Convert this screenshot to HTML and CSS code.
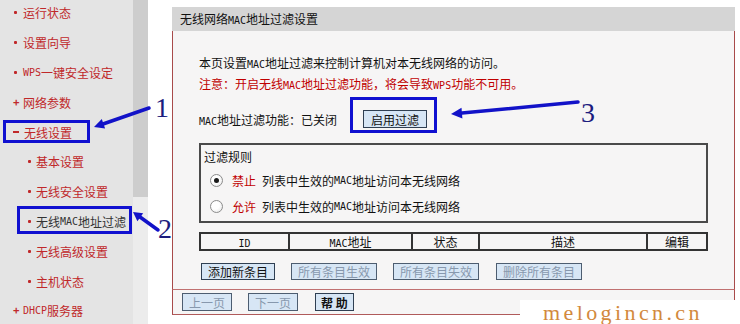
FILE: index.html
```html
<!DOCTYPE html>
<html lang="zh-CN">
<head>
    <meta charset="UTF-8">
    <meta name="viewport" content="width=device-width, initial-scale=1.0">
    <title>无线MAC地址过滤</title>
    <link rel="stylesheet" href="styles.css">
</head>
<body>
    <div class="page">
        <div class="sidebar">
            <ul class="menu">
                <li class="item"><span class="dot"></span>运行状态</li>
                <li class="item"><span class="dot"></span>设置向导</li>
                <li class="item"><span class="dot"></span><span class="en">WPS</span>一键安全设定</li>
                <li class="item"><span class="plus">+</span>网络参数</li>
                <li class="item"><span class="minus"></span>无线设置</li>
                <li class="item sub"><span class="dot"></span>基本设置</li>
                <li class="item sub"><span class="dot"></span>无线安全设置</li>
                <li class="item sub current"><span class="dot"></span>无线<span class="en">MAC</span>地址过滤</li>
                <li class="item sub"><span class="dot"></span>无线高级设置</li>
                <li class="item sub"><span class="dot"></span>主机状态</li>
                <li class="item"><span class="plus">+</span><span class="en">DHCP</span>服务器</li>
            </ul>
        </div>
        <div class="scrollbar"><div class="thumb"></div></div>

        <div class="main">
            <div class="title">无线网络<span class="en">MAC</span>地址过滤设置</div>
            <div class="panel">
                <p class="intro">本页设置<span class="en">MAC</span>地址过滤来控制计算机对本无线网络的访问。</p>
                <p class="intro note">注意：开启无线<span class="en">MAC</span>地址过滤功能，将会导致<span class="en">WPS</span>功能不可用。</p>

                <div class="status-row">
                    <span class="status-label"><span class="en">MAC</span>地址过滤功能：已关闭</span>
                    <button class="btn btn-enable">启用过滤</button>
                </div>

                <div class="rules">
                    <div class="rules-title">过滤规则</div>
                    <div class="rule"><span class="radio checked"></span><span class="rule-key">禁止</span>列表中生效的<span class="en">MAC</span>地址访问本无线网络</div>
                    <div class="rule"><span class="radio"></span><span class="rule-key">允许</span>列表中生效的<span class="en">MAC</span>地址访问本无线网络</div>
                </div>

                <div class="list-head">
                    <div class="cell"><span class="en">ID</span></div>
                    <div class="cell"><span class="en">MAC</span>地址</div>
                    <div class="cell">状态</div>
                    <div class="cell">描述</div>
                    <div class="cell">编辑</div>
                </div>

                <div class="actions">
                    <button class="btn">添加新条目</button>
                    <button class="btn disabled">所有条目生效</button>
                    <button class="btn disabled">所有条目失效</button>
                    <button class="btn disabled">删除所有条目</button>
                </div>
            </div>
            <div class="panel-foot">
                <button class="btn disabled">上一页</button>
                <button class="btn disabled">下一页</button>
                <button class="btn btn-help">帮 助</button>
            </div>
        </div>
    </div>

    <!-- hand-drawn annotations on top of the screenshot -->
    <svg class="marks" width="740" height="324" viewBox="0 0 740 324">
        <g fill="none" stroke="#1010d0" stroke-width="3">
            <rect x="4.5" y="121.5" width="84" height="20"></rect>
            <rect x="18.5" y="207.5" width="112" height="25"></rect>
            <rect x="351.5" y="98.5" width="84" height="33"></rect>
        </g>
        <g stroke="#1212c8" stroke-width="3.5" stroke-linecap="round">
            <line x1="149" y1="108" x2="103" y2="124"></line>
            <line x1="158" y1="230" x2="140" y2="217"></line>
            <line x1="578" y1="102" x2="462" y2="113"></line>
        </g>
        <g fill="#1212c8">
            <polygon points="94,127 105.1,128.5 101.8,119"></polygon>
            <polygon points="133,212 143.2,213.2 137.4,221.3"></polygon>
            <polygon points="451,114 462.4,118.4 461.5,107.8"></polygon>
        </g>
        <g class="mark-num">
            <text x="155" y="117">1</text>
            <text x="158" y="238">2</text>
            <text x="581" y="122">3</text>
        </g>
    </svg>

    <div class="watermark">melogincn.cn</div>
</body>
</html>
```

FILE: styles.css
```css
html, body {
    margin: 0;
    padding: 0;
}

body {
    width: 740px;
    height: 324px;
    overflow: hidden;
    position: relative;
    background: #fff;
    font-family: "Noto Sans CJK SC", "Liberation Sans", sans-serif;
    font-size: 12px;
    color: #111;
}

/* latin letters in the router pages are a narrow fixed-width bitmap font */
.en {
    font-family: "DejaVu Sans Mono", monospace;
    font-size: 10px;
}

.page {
    display: flex;
    height: 324px;
}

/* left menu */
.sidebar {
    width: 133px;
    background: #e4e4e4;
}

.menu {
    list-style: none;
    margin: -2px 0 0;
    padding: 0;
}

.item {
    height: 29.8px;
    display: flex;
    align-items: center;
    padding-left: 14px;
    color: #c0282a;
    white-space: nowrap;
}

.item.sub {
    padding-left: 28px;
}

.item.current {
    color: #333;
}

.dot {
    width: 3px;
    height: 3px;
    border-radius: 1px;
    background: #c0282a;
    margin-right: 6px;
}

.sub .dot {
    margin-right: 5px;
}

.plus {
    width: 6px;
    margin: 0 4px 0 -1px;
    font-weight: bold;
    font-size: 11px;
    line-height: 1;
    color: #c0282a;
}

.minus {
    width: 6px;
    height: 2px;
    background: #c0282a;
    margin: 0 5px 0 -1px;
}

.scrollbar {
    width: 15px;
    background: #ececec;
}

.scrollbar .thumb {
    height: 197px;
    background: #cdcdcd;
}

/* main frame */
.main {
    width: 563px;
    margin-left: 24px;
    padding-top: 7px;
}

.title {
    height: 24px;
    line-height: 24px;
    padding-left: 8px;
    background: #d5d5d5;
}

.panel {
    background: #f6f5f5;
    border-left: 1px solid #a84a4a;
    border-right: 1px solid #a84a4a;
    border-bottom: 1px solid #c07070;
    padding: 22px 0 9px 26px;
}

.intro {
    margin: 0;
    line-height: 19px;
}

.note {
    color: #c00000;
}

.status-row {
    display: flex;
    align-items: center;
    margin-top: 15px;
    height: 18px;
}

.status-label {
    width: 164px;
}

.btn {
    font-family: inherit;
    font-size: 12px;
    height: 17px;
    line-height: 15px;
    padding: 0 6px;
    margin: 0;
    background: #d7e6f5;
    border: 1px solid #2f3f52;
    border-radius: 0;
    color: #111;
}

.btn.disabled {
    color: #8798ad;
    border-color: #4d5d70;
}

.btn-enable {
    height: 18px;
    padding: 0 7px;
}

.rules {
    margin-top: 15px;
    border: 2px solid #4a4a4a;
    padding: 2px 0 0 3px;
    box-sizing: border-box;
    width: 509px;
    height: 80px;
}

.rules-title {
    line-height: 20px;
}

.rule {
    display: flex;
    align-items: center;
    height: 26px;
}

.rule:first-of-type {
    margin-top: 2px;
}

.radio {
    width: 13px;
    height: 13px;
    box-sizing: border-box;
    border: 1px solid #8c8c8c;
    border-radius: 50%;
    background: radial-gradient(circle at 40% 40%, #fff 40%, #e2e2e2 100%);
    margin: 0 9px 0 6px;
    display: flex;
    align-items: center;
    justify-content: center;
}

.radio.checked::after {
    content: "";
    width: 5px;
    height: 5px;
    border-radius: 50%;
    background: #1a1a1a;
}

.rule-key {
    color: #c00000;
    margin-right: 6px;
}

.list-head {
    margin-top: 9px;
    width: 509px;
    box-sizing: border-box;
    display: grid;
    grid-template-columns: 87px 121px 65px 166px 58px;
    gap: 2px;
    padding: 2px;
    background: #333;
}

.list-head .cell {
    background: #f6f5f5;
    height: 15px;
    line-height: 15px;
    text-align: center;
}

.actions {
    display: flex;
    gap: 16px;
    margin: 12px 0 0 2px;
}

.actions .btn:last-child {
    margin-left: 1px;
}

.panel-foot {
    background: #f6f5f5;
    border-left: 1px solid #a84a4a;
    border-right: 1px solid #a84a4a;
    border-bottom: 1px solid #b05a5a;
    padding: 3px 0 3px 9px;
    display: flex;
    gap: 16px;
}

.panel-foot .btn {
    height: 18px;
}

.btn-help {
    padding: 0 5px;
    margin-left: 1px;
    font-weight: bold;
}

/* annotations */
.marks {
    position: absolute;
    left: 0;
    top: 0;
    pointer-events: none;
}

.mark-num {
    font-family: "Liberation Serif", serif;
    font-size: 28px;
    fill: #1c1c7e;
}

.watermark {
    position: absolute;
    left: 520px;
    top: 300px;
    width: 220px;
    height: 24px;
    box-sizing: border-box;
    padding-left: 23px;
    background: #fff;
    font-family: "Liberation Serif", serif;
    font-size: 22px;
    letter-spacing: 3.4px;
    line-height: 26px;
    color: #d2893d;
}
```
